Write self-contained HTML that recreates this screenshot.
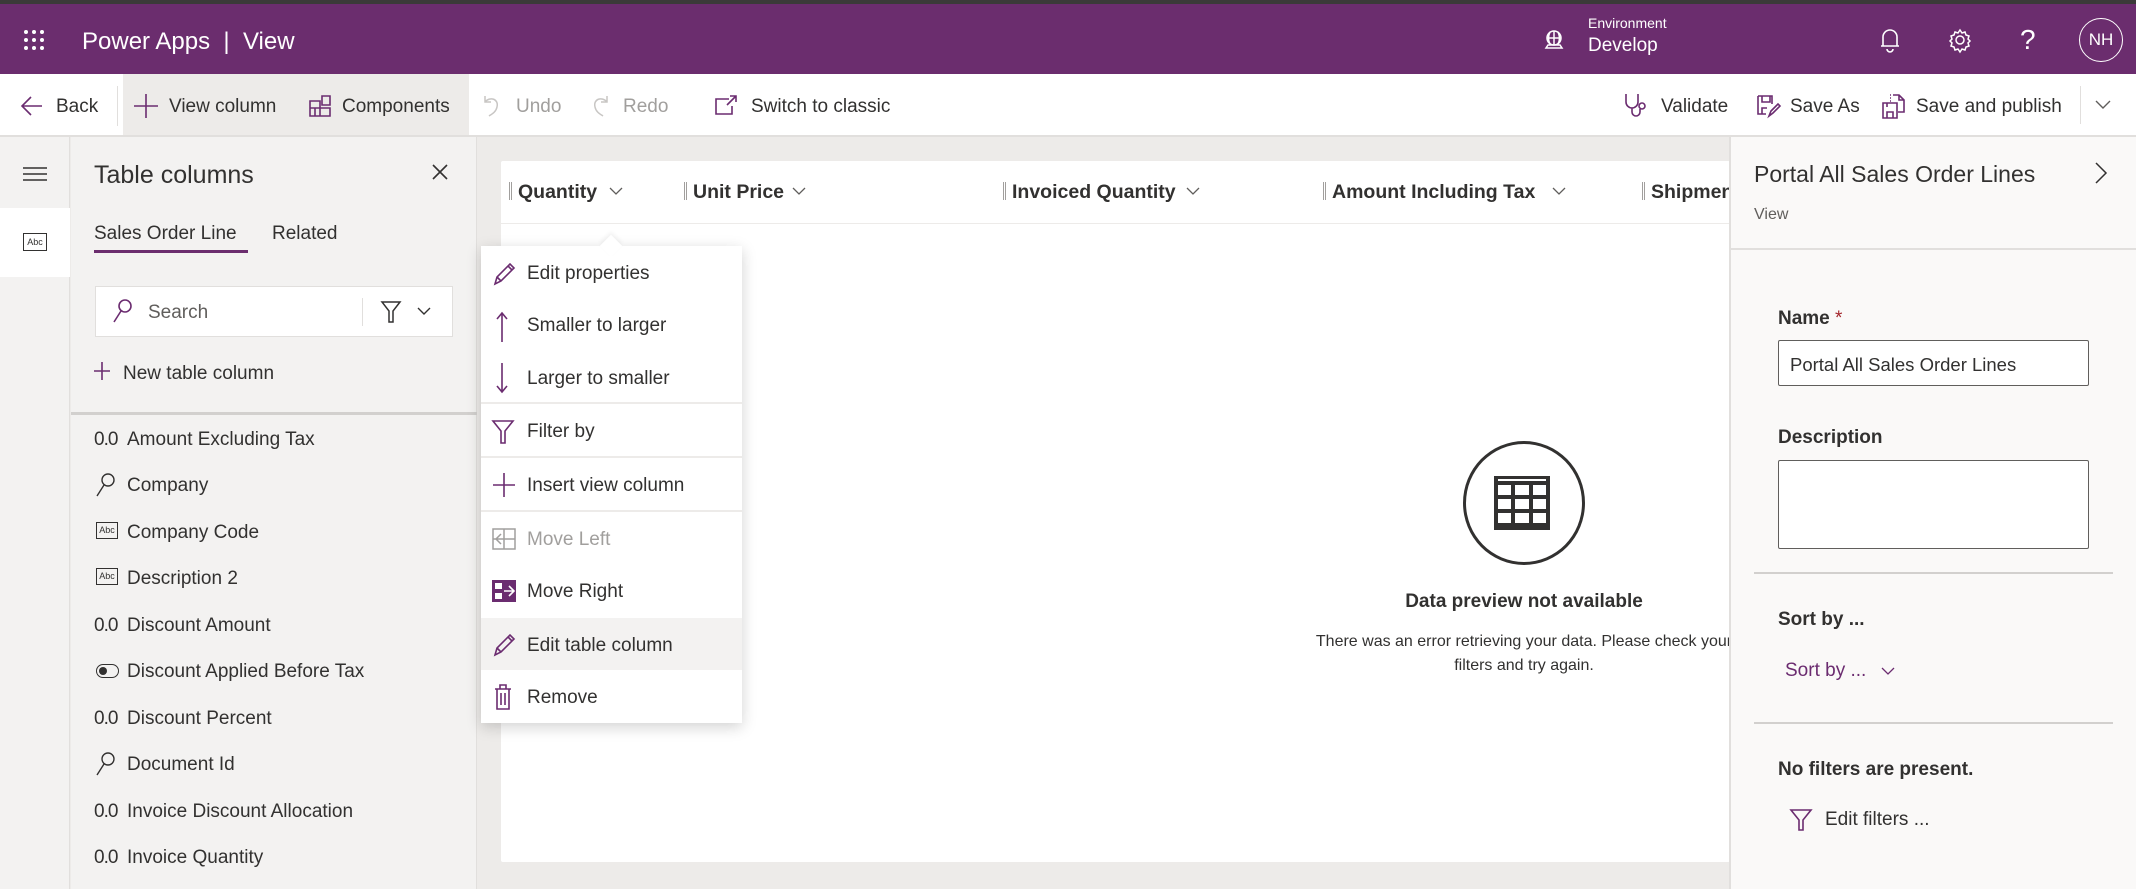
<!DOCTYPE html>
<html><head><meta charset="utf-8"><style>
*{margin:0;padding:0;box-sizing:border-box}
body{width:2136px;height:889px;overflow:hidden;font-family:"Liberation Sans",sans-serif;color:#323130;background:#edebe9;position:relative}
.a{position:absolute;white-space:nowrap}
svg{position:absolute;overflow:visible}
.t{font-size:19px;line-height:24px}
.p{stroke:#6b2c70;fill:none;stroke-width:1.6}
.z{display:inline-block;width:33px;letter-spacing:-1px}
.h{font-size:19.5px;font-weight:bold;color:#323130}
</style></head><body>
<div class="a" style="left:0;top:0;width:2136px;height:4px;background:#3b3a39"></div>
<div class="a" style="left:0;top:4px;width:2136px;height:70px;background:#6b2d6e"></div>
<svg style="left:24px;top:30px" width="24" height="24"><g fill="#fff"><circle cx="2" cy="2" r="2"/><circle cx="10" cy="2" r="2"/><circle cx="18" cy="2" r="2"/><circle cx="2" cy="10" r="2"/><circle cx="10" cy="10" r="2"/><circle cx="18" cy="10" r="2"/><circle cx="2" cy="18" r="2"/><circle cx="10" cy="18" r="2"/><circle cx="18" cy="18" r="2"/></g></svg>
<div class="a" style="left:82px;top:28px;font-size:24px;color:#fff">Power Apps&nbsp; |&nbsp; View</div>
<svg style="left:1542px;top:28px" width="24" height="24" fill="none" stroke="#fff" stroke-width="1.5"><circle cx="12" cy="10" r="7"/><path d="M5 10h14M12 3v14M8 4c-2 4-2 8 0 12M16 4c2 4 2 8 0 12M4 20h16l-2-3H6z"/></svg>
<div class="a" style="left:1588px;top:15px;font-size:14px;color:#fff">Environment</div>
<div class="a" style="left:1588px;top:35px;font-size:19px;color:#fff">Develop</div>
<svg style="left:1879px;top:27px" width="22" height="26" fill="none" stroke="#fff" stroke-width="1.6"><path d="M4 19V10a7 7 0 0 1 14 0v9h2H2zM8 22a3 3 0 0 0 6 0"/></svg>
<svg style="left:1948px;top:28px" width="24" height="24" fill="none" stroke="#fff" stroke-width="1.5"><circle cx="12" cy="12" r="4"/><path d="M12 2l2 3 3-1 1 3 3 1-1 3 2 2-2 2 1 3-3 1-1 3-3-1-2 3-2-3-3 1-1-3-3-1 1-3-2-2 2-2-1-3 3-1 1-3 3 1z"/></svg>
<div class="a" style="left:2020px;top:24px;font-size:28px;color:#fff">?</div>
<div class="a" style="left:2079px;top:18px;width:44px;height:44px;border:1.5px solid #fff;border-radius:50%;color:#fff;font-size:17px;line-height:41px;text-align:center">NH</div>
<!-- toolbar -->
<div class="a" style="left:0;top:74px;width:2136px;height:63px;background:#fff;border-bottom:2px solid #e1dfdd"></div>
<div class="a" style="left:123px;top:74px;width:346px;height:61px;background:#edebe9"></div>
<div class="a" style="left:117px;top:86px;width:1px;height:40px;background:#e1dfdd"></div>
<svg style="left:20px;top:95px" width="24" height="22" fill="none" stroke="#6b2c70" stroke-width="1.6"><path d="M22 11H2M11 2L2 11l9 9"/></svg>
<div class="a t" style="left:56px;top:95px">Back</div>
<svg style="left:134px;top:94px" width="24" height="24" class="p"><path d="M12 0v24M0 12h24"/></svg>
<div class="a t" style="left:169px;top:95px">View column</div>
<svg style="left:309px;top:95px" width="22" height="22" class="p"><path d="M1 6h10v15H1zM1 13h10M6 13v8M11 13h10v8H11M13 1h8v9h-8z"/></svg>
<div class="a t" style="left:342px;top:95px">Components</div>
<svg style="left:483px;top:94px" width="18" height="24" fill="none" stroke="#c8c6c4" stroke-width="1.5"><path d="M2 2v6h6M2 8c5-6 14-3 12 5-1 5-5 7-8 9"/></svg>
<div class="a t" style="left:516px;top:95px;color:#a19f9d">Undo</div>
<svg style="left:591px;top:94px" width="18" height="24" fill="none" stroke="#c8c6c4" stroke-width="1.5"><path d="M16 2v6h-6M16 8c-5-6-14-3-12 5 1 5 5 7 8 9"/></svg>
<div class="a t" style="left:623px;top:95px;color:#a19f9d">Redo</div>
<svg style="left:715px;top:95px" width="22" height="22" class="p"><path d="M14 4H1v15h16v-8M12 10l9-9M15 1h6v6"/></svg>
<div class="a t" style="left:751px;top:95px">Switch to classic</div>
<svg style="left:1624px;top:93px" width="26" height="26" class="p"><path d="M2 1v8a6 6 0 0 0 12 0V1M8 15v4a4 4 0 0 0 8 0v-3"/><circle cx="18" cy="13" r="3"/></svg>
<div class="a t" style="left:1661px;top:95px">Validate</div>
<svg style="left:1756px;top:94px" width="24" height="24" class="p"><path d="M2 2h14v8M2 2v18h8M6 2v6h8V2M6 20v-6h5M13 22l2-5 7-7 2 2-7 7z"/></svg>
<div class="a t" style="left:1790px;top:95px">Save As</div>
<svg style="left:1881px;top:93px" width="26" height="26" class="p"><path d="M2 10h14v15H2zM6 25v-6h6v6M6 10v4M12 2h6l5 5v12h-6M18 2v5h5M9 2h1M9 5h1M9 8h1"/></svg>
<div class="a t" style="left:1916px;top:95px">Save and publish</div>
<div class="a" style="left:2080px;top:86px;width:1px;height:38px;background:#e1dfdd"></div>
<svg style="left:2095px;top:100px" width="16" height="10" fill="none" stroke="#605e5c" stroke-width="1.4"><path d="M1 1l7 7 7-7"/></svg>
<!-- left rail -->
<div class="a" style="left:0;top:137px;width:70px;height:752px;background:#f3f2f1;border-right:1px solid #e1dfdd"></div>
<svg style="left:23px;top:167px" width="24" height="14" fill="none" stroke="#323130" stroke-width="1.5"><path d="M0 1h24M0 7h24M0 13h24"/></svg>
<div class="a" style="left:0;top:208px;width:70px;height:69px;background:#fff"></div>
<div class="a" style="left:23px;top:233px;width:24px;height:18px;border:1.3px solid #323130;font-size:9px;line-height:16px;text-align:center">Abc</div>
<!-- left panel -->
<div class="a" style="left:71px;top:137px;width:406px;height:752px;background:#f3f2f1;border-right:1px solid #e1dfdd"></div>
<div class="a" style="left:94px;top:161px;font-size:25px">Table columns</div>
<svg style="left:432px;top:164px" width="16" height="16" fill="none" stroke="#323130" stroke-width="1.6"><path d="M1 1l14 14M15 1L1 15"/></svg>
<div class="a t" style="left:94px;top:222px">Sales Order Line</div>
<div class="a" style="left:94px;top:250px;width:154px;height:3px;background:#6b2d6e"></div>
<div class="a t" style="left:272px;top:222px">Related</div>
<div class="a" style="left:95px;top:286px;width:358px;height:51px;background:#fff;border:1px solid #e1dfdd"></div>
<svg style="left:113px;top:299px" width="20" height="24" class="p"><circle cx="12" cy="7" r="6"/><path d="M8 12L1 23"/></svg>
<div class="a t" style="left:148px;top:301px;color:#605e5c">Search</div>
<div class="a" style="left:362px;top:298px;width:1px;height:28px;background:#e1dfdd"></div>
<svg style="left:381px;top:301px" width="20" height="22" fill="none" stroke="#323130" stroke-width="1.5"><path d="M1 1h18l-7 9v11h-4V10z"/></svg>
<svg style="left:417px;top:307px" width="14" height="9" fill="none" stroke="#323130" stroke-width="1.4"><path d="M1 1l6 6 6-6"/></svg>
<svg style="left:94px;top:362px" width="16" height="18" class="p"><path d="M8 0v18M0 9h16"/></svg>
<div class="a t" style="left:123px;top:362px">New table column</div>
<div class="a" style="left:71px;top:412px;width:406px;height:3px;background:#d2d0ce"></div>
<div class="a t" style="left:94px;top:428px"><span class="z">0.0</span>Amount Excluding Tax</div>
<svg style="left:96px;top:473px" width="20" height="24" fill="none" stroke="#323130" stroke-width="1.4"><circle cx="12" cy="7" r="6"/><path d="M8 12L1 23"/></svg>
<div class="a t" style="left:127px;top:474px">Company</div>
<div class="a" style="left:96px;top:522px;width:22px;height:17px;border:1.2px solid #323130;font-size:9px;line-height:15px;text-align:center">Abc</div>
<div class="a t" style="left:127px;top:521px">Company Code</div>
<div class="a" style="left:96px;top:568px;width:22px;height:17px;border:1.2px solid #323130;font-size:9px;line-height:15px;text-align:center">Abc</div>
<div class="a t" style="left:127px;top:567px">Description 2</div>
<div class="a t" style="left:94px;top:614px"><span class="z">0.0</span>Discount Amount</div>
<div class="a" style="left:96px;top:664px;width:23px;height:14px;border:1.5px solid #323130;border-radius:7px"></div><div class="a" style="left:99px;top:667px;width:8px;height:8px;border-radius:50%;background:#323130"></div>
<div class="a t" style="left:127px;top:660px">Discount Applied Before Tax</div>
<div class="a t" style="left:94px;top:707px"><span class="z">0.0</span>Discount Percent</div>
<svg style="left:96px;top:752px" width="20" height="24" fill="none" stroke="#323130" stroke-width="1.4"><circle cx="12" cy="7" r="6"/><path d="M8 12L1 23"/></svg>
<div class="a t" style="left:127px;top:753px">Document Id</div>
<div class="a t" style="left:94px;top:800px"><span class="z">0.0</span>Invoice Discount Allocation</div>
<div class="a t" style="left:94px;top:846px"><span class="z">0.0</span>Invoice Quantity</div>
<!-- grid card -->
<div class="a" style="left:501px;top:161px;width:1229px;height:701px;background:#fff;border-radius:2px"></div>
<div class="a" style="left:501px;top:223px;width:1229px;height:1px;background:#edebe9"></div>
<div class="a" style="left:509px;top:182px;width:3px;height:18px;border-left:1px solid #a19f9d;border-right:1px solid #a19f9d"></div>
<div class="a h" style="left:518px;top:181px">Quantity</div>
<svg style="left:609px;top:187px" width="14" height="9" fill="none" stroke="#605e5c" stroke-width="1.3"><path d="M1 1l6 6 6-6"/></svg>
<div class="a" style="left:684px;top:182px;width:3px;height:18px;border-left:1px solid #a19f9d;border-right:1px solid #a19f9d"></div>
<div class="a h" style="left:693px;top:181px">Unit Price</div>
<svg style="left:792px;top:187px" width="14" height="9" fill="none" stroke="#605e5c" stroke-width="1.3"><path d="M1 1l6 6 6-6"/></svg>
<div class="a" style="left:1003px;top:182px;width:3px;height:18px;border-left:1px solid #a19f9d;border-right:1px solid #a19f9d"></div>
<div class="a h" style="left:1012px;top:181px">Invoiced Quantity</div>
<svg style="left:1186px;top:187px" width="14" height="9" fill="none" stroke="#605e5c" stroke-width="1.3"><path d="M1 1l6 6 6-6"/></svg>
<div class="a" style="left:1323px;top:182px;width:3px;height:18px;border-left:1px solid #a19f9d;border-right:1px solid #a19f9d"></div>
<div class="a h" style="left:1332px;top:181px">Amount Including Tax</div>
<svg style="left:1552px;top:187px" width="14" height="9" fill="none" stroke="#605e5c" stroke-width="1.3"><path d="M1 1l6 6 6-6"/></svg>
<div class="a" style="left:1642px;top:182px;width:3px;height:18px;border-left:1px solid #a19f9d;border-right:1px solid #a19f9d"></div>
<div class="a h" style="left:1651px;top:181px;width:79px;overflow:hidden">Shipment</div>
<!-- empty state -->
<div class="a" style="left:1463px;top:441px;width:122px;height:124px;border:3px solid #323130;border-radius:50%"></div>
<svg style="left:1494px;top:476px" width="56" height="54"><rect x="0" y="0" width="56" height="54" fill="#323130"/><g fill="#fff"><rect x="4" y="9" width="13" height="10"/><rect x="21" y="9" width="14" height="10"/><rect x="39" y="9" width="13" height="10"/><rect x="4" y="23" width="13" height="10"/><rect x="21" y="23" width="14" height="10"/><rect x="39" y="23" width="13" height="10"/><rect x="4" y="37" width="13" height="10"/><rect x="21" y="37" width="14" height="10"/><rect x="39" y="37" width="13" height="10"/><rect x="4" y="3" width="48" height="2"/></g></svg>
<div class="a" style="left:1324px;top:591px;width:400px;text-align:center;font-size:19px;font-weight:bold">Data preview not available</div>
<div class="a" style="left:1310px;top:630px;width:428px;text-align:center;font-size:16px;line-height:24px;white-space:normal">There was an error retrieving your data. Please check your filters and try again.</div>
<!-- context menu -->
<div class="a" style="left:481px;top:246px;width:261px;height:477px;background:#fff;box-shadow:0 4px 14px rgba(0,0,0,.18)"></div>
<div class="a" style="left:603px;top:238px;width:16px;height:16px;background:#fff;transform:rotate(45deg);box-shadow:-2px -2px 4px rgba(0,0,0,.06)"></div>
<div class="a" style="left:481px;top:402px;width:261px;height:2px;background:#edebe9"></div>
<div class="a" style="left:481px;top:456px;width:261px;height:2px;background:#edebe9"></div>
<div class="a" style="left:481px;top:510px;width:261px;height:2px;background:#edebe9"></div>
<div class="a" style="left:481px;top:618px;width:261px;height:52px;background:#f3f2f1"></div>
<svg style="left:493px;top:262px" width="24" height="24" class="p"><path d="M2 22l2-7L17 2l4 4L8 19zM4 15l4 4M15 4l4 4"/></svg>
<div class="a t" style="left:527px;top:262px">Edit properties</div>
<svg style="left:496px;top:312px" width="12" height="30" class="p"><path d="M6 30V2M1 7l5-6 5 6"/></svg>
<div class="a t" style="left:527px;top:314px">Smaller to larger</div>
<svg style="left:496px;top:363px" width="12" height="30" class="p"><path d="M6 0v28M1 23l5 6 5-6"/></svg>
<div class="a t" style="left:527px;top:367px">Larger to smaller</div>
<svg style="left:492px;top:420px" width="22" height="24" class="p"><path d="M1 1h20l-8 10v12h-4V11z"/></svg>
<div class="a t" style="left:527px;top:420px">Filter by</div>
<svg style="left:493px;top:473px" width="22" height="24" class="p"><path d="M11 0v24M0 12h22"/></svg>
<div class="a t" style="left:527px;top:474px">Insert view column</div>
<svg style="left:492px;top:528px" width="24" height="22" fill="none" stroke="#a19f9d" stroke-width="1.5"><rect x="1" y="1" width="22" height="20"/><path d="M12 1v20M1 11h22M9 6l-5 5 5 5"/></svg>
<div class="a t" style="left:527px;top:528px;color:#a19f9d">Move Left</div>
<svg style="left:492px;top:580px" width="24" height="22"><rect x="0" y="0" width="24" height="22" fill="#6b2c70"/><g fill="#fff"><rect x="3" y="3" width="7" height="6"/><rect x="3" y="13" width="7" height="6"/></g><path d="M12 11h9M17 6l5 5-5 5" stroke="#fff" stroke-width="1.6" fill="none"/></svg>
<div class="a t" style="left:527px;top:580px">Move Right</div>
<svg style="left:493px;top:633px" width="24" height="24" class="p"><path d="M2 22l2-7L17 2l4 4L8 19zM4 15l4 4M15 4l4 4"/></svg>
<div class="a t" style="left:527px;top:634px">Edit table column</div>
<svg style="left:494px;top:684px" width="18" height="26" class="p"><path d="M1 5h16M6 5V1h6v4M3 5v20h12V5M7 9v12M11 9v12"/></svg>
<div class="a t" style="left:527px;top:686px">Remove</div>
<!-- right panel -->
<div class="a" style="left:1729px;top:137px;width:407px;height:752px;background:#faf9f8;border-left:2px solid #e1dfdd"></div>
<div class="a" style="left:1754px;top:161px;font-size:23px">Portal All Sales Order Lines</div>
<svg style="left:2095px;top:162px" width="12" height="22" fill="none" stroke="#323130" stroke-width="1.5"><path d="M1 1l10 10L1 21"/></svg>
<div class="a" style="left:1754px;top:206px;font-size:16px;color:#605e5c">View</div>
<div class="a" style="left:1731px;top:248px;width:405px;height:2px;background:#e1dfdd"></div>
<div class="a" style="left:1778px;top:308px;font-size:19px;font-weight:bold">Name <span style="color:#a4262c;font-weight:normal">*</span></div>
<div class="a" style="left:1778px;top:340px;width:311px;height:46px;background:#fff;border:1.5px solid #605e5c;border-radius:2px"></div>
<div class="a" style="left:1790px;top:354px;font-size:18.5px">Portal All Sales Order Lines</div>
<div class="a" style="left:1778px;top:427px;font-size:19px;font-weight:bold">Description</div>
<div class="a" style="left:1778px;top:460px;width:311px;height:89px;background:#fff;border:1.5px solid #605e5c;border-radius:2px"></div>
<div class="a" style="left:1754px;top:572px;width:359px;height:2px;background:#d2d0ce"></div>
<div class="a" style="left:1778px;top:609px;font-size:19px;font-weight:bold">Sort by ...</div>
<div class="a" style="left:1785px;top:660px;font-size:19px;color:#6b2c70">Sort by ...</div>
<svg style="left:1881px;top:667px" width="14" height="9" fill="none" stroke="#6b2c70" stroke-width="1.3"><path d="M1 1l6 6 6-6"/></svg>
<div class="a" style="left:1754px;top:722px;width:359px;height:2px;background:#d2d0ce"></div>
<div class="a" style="left:1778px;top:759px;font-size:19px;font-weight:bold">No filters are present.</div>
<svg style="left:1790px;top:809px" width="22" height="22" class="p"><path d="M1 1h20l-8 10v10h-4V11z"/></svg>
<div class="a" style="left:1825px;top:809px;font-size:19px">Edit filters ...</div>
</body></html>
